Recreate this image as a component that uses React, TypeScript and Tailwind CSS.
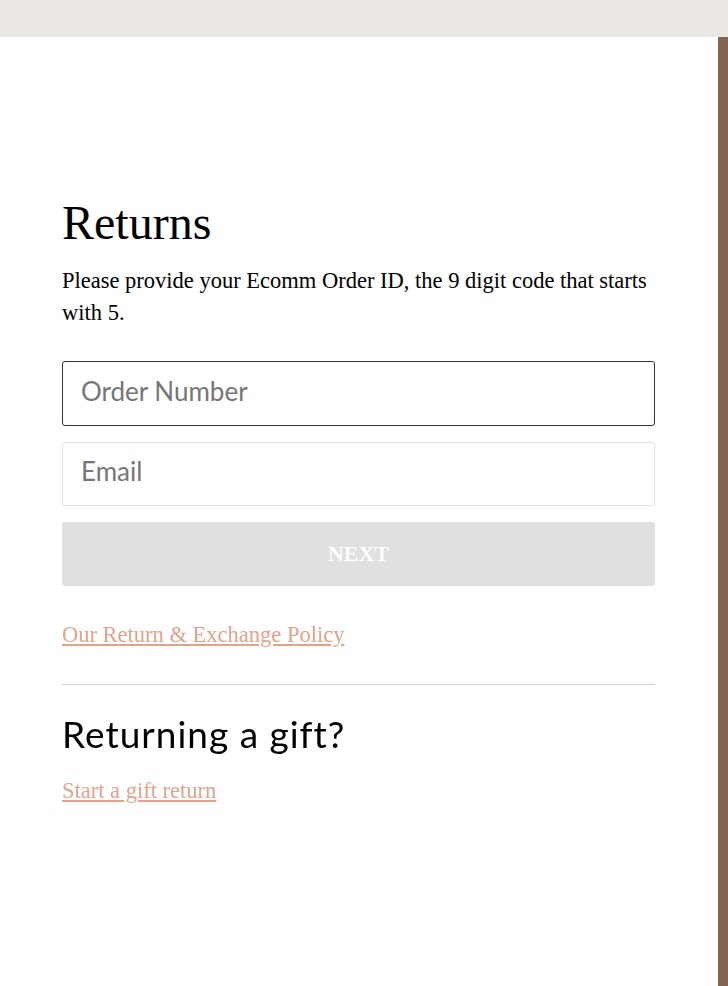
import { useState } from "react";

const serif = "font-['Liberation_Serif','Times_New_Roman',serif]";
const sans = "font-['Lato','Noto_Sans',sans-serif]";

export default function App() {
  const [order, setOrder] = useState("");
  const [email, setEmail] = useState("");
  const ready = order.trim() !== "" && email.trim() !== "";

  return (
    <div className="flex min-h-screen flex-col bg-white">
      <div className="h-[37px] shrink-0 bg-[#ebe7e2]" />

      <div className="flex flex-1">
        <main className={`flex-1 px-[62px] pt-[157px] ${serif}`}>
          <div className="w-[593px]">
            <h1 className="text-[48px] font-normal leading-[58px] text-black">Returns</h1>
            <p className="mt-[13px] text-[22.5px] leading-[32px] text-black">
              Please provide your Ecomm Order ID, the 9 digit code that starts with 5.
            </p>

            <form className="mt-[32px] flex flex-col gap-4" onSubmit={(e) => e.preventDefault()}>
              <input
                autoFocus
                value={order}
                onChange={(e) => setOrder(e.target.value)}
                placeholder="Order Number"
                className={`h-[65px] w-full rounded-[3px] border border-[#333333] bg-white px-[18px] pb-[6px] text-[26px] text-black caret-black outline-none placeholder:text-[#767676] ${sans}`}
              />
              <input
                type="email"
                value={email}
                onChange={(e) => setEmail(e.target.value)}
                placeholder="Email"
                className={`h-[64px] w-full rounded-[3px] border border-[#e3e3e3] bg-white px-[18px] pb-[6px] text-[26px] text-black outline-none placeholder:text-[#767676] ${sans}`}
              />
              <button
                type="submit"
                disabled={!ready}
                className="h-[64px] w-full rounded-[3px] bg-[#e0e0e0] pb-[2px] text-[22px] font-bold text-white"
              >
                NEXT
              </button>
            </form>

            <a href="#" className="mt-[33px] block w-fit text-[22.5px] leading-[32px] text-[#e5a18a] underline">
              Our Return &amp; Exchange Policy
            </a>

            <hr className="mt-[33px] border-0 border-t border-[#d0d0d0]" />

            <h2 className={`mt-[27px] text-[37px] font-normal leading-[1.2] tracking-[1px] text-black ${sans}`}>
              Returning a gift?
            </h2>
            <a href="#" className="mt-[19px] block w-fit text-[22.5px] leading-[32px] text-[#e5a18a] underline">
              Start a gift return
            </a>
          </div>
        </main>

        <div className="w-[10px] shrink-0 bg-[#836454]" />
      </div>
    </div>
  );
}
